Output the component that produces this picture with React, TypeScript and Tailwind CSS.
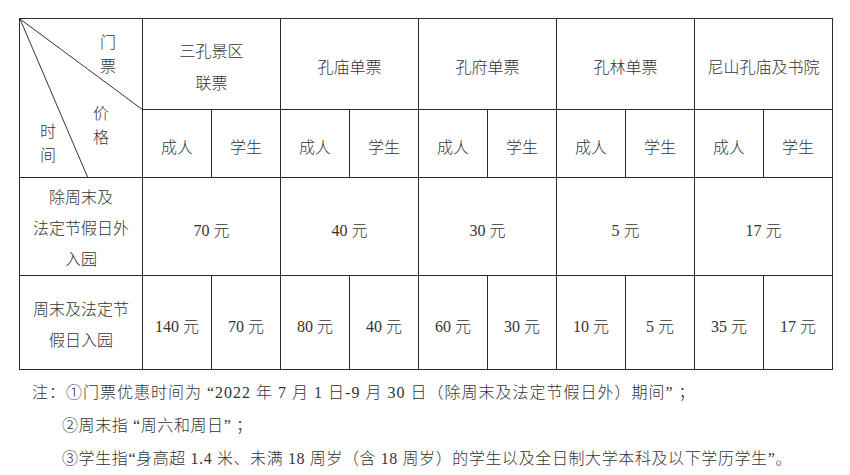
import React from "react";

const sites = ["孔庙单票", "孔府单票", "孔林单票", "尼山孔庙及书院"];
const offPeak = ["70 元", "40 元", "30 元", "5 元", "17 元"];
const peak = ["140 元", "70 元", "80 元", "40 元", "60 元", "30 元", "10 元", "5 元", "35 元", "17 元"];

const cell = "border border-[#2a2a2a] text-center align-middle pt-[8px] p-0";
const side = "border border-[#2a2a2a] text-center align-middle p-0 pt-[4px]";

export default function App() {
  return (
    <div className="min-h-screen bg-white text-[#333] text-[16px] font-['Liberation_Serif','Noto_Sans_CJK_SC',serif] font-light pl-[19px] pt-[18px]">
      <table className="border-collapse table-fixed w-[814px]">
        <colgroup>
          <col className="w-[123px]" />
          {Array.from({ length: 10 }).map((_, i) => (
            <col key={i} className="w-[69px]" />
          ))}
        </colgroup>
        <tbody>
          <tr className="h-[91px]">
            <td rowSpan={2} className="border border-[#2a2a2a] relative p-0">
              <svg className="absolute inset-0" width="123" height="159" viewBox="0 0 123 159">
                <line x1="0" y1="0" x2="123" y2="91" stroke="#333" strokeWidth="1" />
                <line x1="0" y1="0" x2="68" y2="159" stroke="#333" strokeWidth="1" />
              </svg>
              <span className="absolute left-[80px] top-[12px] leading-[24px] w-[16px]">门<br />票</span>
              <span className="absolute left-[73px] top-[83px] leading-[24px] w-[16px]">价<br />格</span>
              <span className="absolute left-[20px] top-[101px] leading-[24px] w-[16px]">时<br />间</span>
            </td>
            <td colSpan={2} className={`${cell} leading-[32px]`}>
              三孔景区
              <br />
              联票
            </td>
            {sites.map((s) => (
              <td key={s} colSpan={2} className={cell}>
                {s}
              </td>
            ))}
          </tr>
          <tr className="h-[68px]">
            {Array.from({ length: 5 }).flatMap((_, i) => [
              <td key={`a${i}`} className={cell}>成人</td>,
              <td key={`s${i}`} className={cell}>学生</td>,
            ])}
          </tr>
          <tr className="h-[98px]">
            <td className={`${side} leading-[31px]`}>
              除周末及
              <br />
              法定节假日外
              <br />
              入园
            </td>
            {offPeak.map((p, i) => (
              <td key={i} colSpan={2} className={cell}>
                {p}
              </td>
            ))}
          </tr>
          <tr className="h-[94px]">
            <td className={`${side} leading-[31px]`}>
              周末及法定节
              <br />
              假日入园
            </td>
            {peak.map((p, i) => (
              <td key={i} className={cell}>
                {p}
              </td>
            ))}
          </tr>
        </tbody>
      </table>
      <div className="pl-[13px] pt-[6px] leading-[33px] tracking-[0.6px]">
        <p className="tracking-[1px]">注：①门票优惠时间为 “2022 年 7 月 1 日-9 月 30 日（除周末及法定节假日外）期间” ；</p>
        <p className="pl-[30px]">②周末指 “周六和周日” ；</p>
        <p className="pl-[30px]">③学生指“身高超 1.4 米、未满 18 周岁（含 18 周岁）的学生以及全日制大学本科及以下学历学生”。</p>
      </div>
    </div>
  );
}
